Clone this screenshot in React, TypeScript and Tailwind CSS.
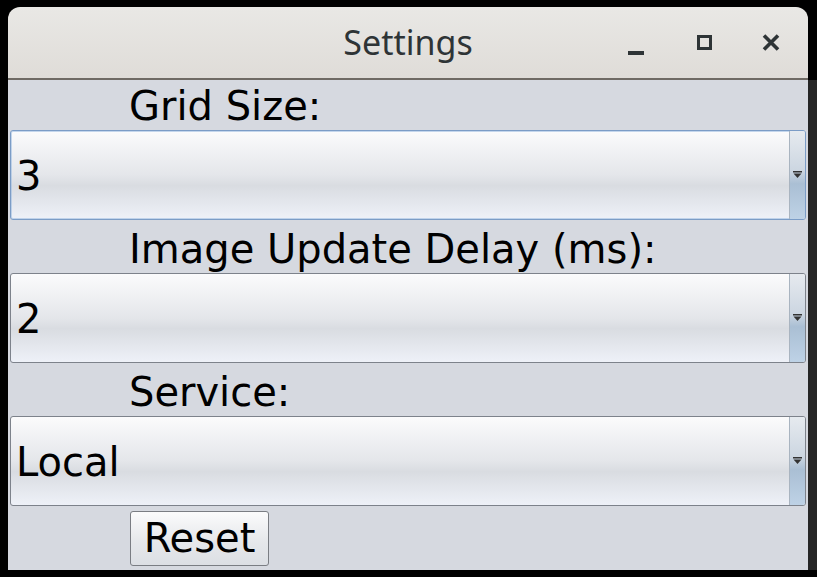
import { ReactNode } from 'react';

function Arrow() {
  return (
    <svg width="9" height="8" viewBox="0 0 9 8" className="block">
      <rect x="0" y="0" width="9" height="1.5" fill="#333" />
      <path d="M0.5 2.5 H8.5 L4.5 7 Z" fill="#333" />
    </svg>
  );
}

function Combo({ value, focused }: { value: string; focused?: boolean }) {
  return (
    <div
      className={`mx-[2px] h-[90px] flex rounded-[3px] border overflow-hidden ${
        focused ? 'border-[#7b9cc6] shadow-[inset_0_0_0_1px_rgba(160,190,225,0.6)]' : 'border-[#7d828b]'
      } bg-[linear-gradient(to_bottom,#fbfbfc_0%,#e4e6ea_50%,#d9dce1_62%,#eef1f8_100%)]`}
    >
      <div className="flex-1 flex items-center pl-[5px] pt-[2px] text-[40px] text-black leading-none">{value}</div>
      <div className="w-[16px] border-l border-[#a9b4c0] flex items-center justify-center bg-[linear-gradient(to_bottom,#e6eaef_0%,#ccd6e1_45%,#aabfd4_60%,#bed2e6_100%)]">
        <Arrow />
      </div>
    </div>
  );
}

function Label({ children, h }: { children: ReactNode; h: string }) {
  return (
    <div className={`${h} flex items-end pl-[121px] pb-[4px] text-[40px] leading-none text-black`}>
      {children}
    </div>
  );
}

export default function App() {
  return (
    <div
      className="w-[817px] h-[577px] bg-black pt-[7px] pl-[8px] flex"
      style={{ fontFamily: '"DejaVu Sans", sans-serif' }}
    >
      <div className="w-[800px] h-[563px] flex flex-col">
        <div className="h-[73px] shrink-0 rounded-t-[12px] border-b-2 border-[#6f6a64] bg-[linear-gradient(to_bottom,#e9e8e5,#dfdcd8)] relative">
          <div
            className="absolute left-0 right-0 top-[18px] text-center text-[34px] leading-none text-[#2e3436]"
            style={{ fontFamily: '"Noto Sans", sans-serif' }}
          >
            Settings
          </div>
          <div className="absolute left-[620px] top-[44px] w-[16px] h-[4px] bg-[#2e3436]" />
          <div className="absolute left-[689px] top-[28px] w-[15px] h-[15px] border-[3px] border-[#2e3436]" />
          <svg className="absolute left-[754px] top-[27px]" width="18" height="17" viewBox="0 0 18 17">
            <path d="M2 1.5 L16 15.5 M16 1.5 L2 15.5" stroke="#2e3436" strokeWidth="3.6" />
          </svg>
        </div>
        <div className="flex-1 bg-[#d6d9e0] flex flex-col">
          <Label h="h-[50px]">Grid Size:</Label>
          <Combo value="3" focused />
          <Label h="h-[53px]">Image Update Delay (ms):</Label>
          <Combo value="2" />
          <Label h="h-[53px]">Service:</Label>
          <Combo value="Local" />
          <div className="pl-[122px] pt-[5px]">
            <button className="w-[139px] h-[55px] rounded-[3px] border border-[#7a7d83] bg-[linear-gradient(to_bottom,#fbfbfc_0%,#e6e8eb_55%,#dcdfe4_100%)] text-[40px] leading-none text-black flex items-center justify-center pb-[2px]">
              Reset
            </button>
          </div>
        </div>
      </div>
      <div className="w-[9px] mt-[73px] h-[490px] bg-[#262626]" />
    </div>
  );
}
